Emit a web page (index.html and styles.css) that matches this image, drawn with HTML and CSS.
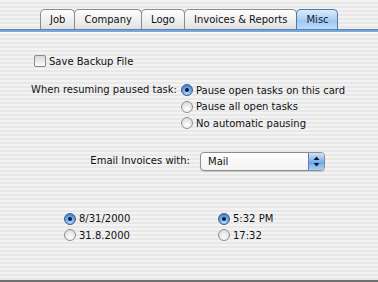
FILE: index.html
```html
<!DOCTYPE html>
<html lang="en">
<head>
    <meta charset="utf-8" />
    <title>Preferences - Misc</title>
    <link rel="stylesheet" href="styles.css">
</head>
<body>
<div class="window">
    <div class="tabs">
        <div class="tab">Job</div>
        <div class="tab">Company</div>
        <div class="tab">Logo</div>
        <div class="tab">Invoices &amp; Reports</div>
        <div class="tab selected">Misc</div>
    </div>
    <div class="tabline"></div>

    <div class="pane">
        <label class="check-row">
            <span class="checkbox"></span>
            <span>Save Backup File</span>
        </label>

        <div class="resume">
            <div class="label resume-label">When resuming paused task:</div>
            <div class="options">
                <div class="opt"><span class="radio on"></span>Pause open tasks on this card</div>
                <div class="opt"><span class="radio"></span>Pause all open tasks</div>
                <div class="opt"><span class="radio"></span>No automatic pausing</div>
            </div>
        </div>

        <div class="email">
            <div class="label email-label">Email Invoices with:</div>
            <div class="popup">
                <span class="popup-text">Mail</span>
                <span class="popup-arrows">
                    <svg width="7" height="11" viewBox="0 0 7 11">
                        <path d="M3.5 0.5 L6.5 4 L0.5 4 Z" fill="#0b1c3a"/>
                        <path d="M3.5 10.5 L6.5 7 L0.5 7 Z" fill="#0b1c3a"/>
                    </svg>
                </span>
            </div>
        </div>

        <div class="formats">
            <div class="options date">
                <div class="opt"><span class="radio on"></span>8/31/2000</div>
                <div class="opt"><span class="radio"></span>31.8.2000</div>
            </div>
            <div class="options time">
                <div class="opt"><span class="radio on"></span>5:32 PM</div>
                <div class="opt"><span class="radio"></span>17:32</div>
            </div>
        </div>
    </div>
</div>
</body>
</html>
```

FILE: styles.css
```css
html, body {
    margin: 0;
    height: 100%;
}
body {
    font-family: "DejaVu Sans", "Liberation Sans", sans-serif;
    font-size: 10px;
    color: #111;
    overflow: hidden;
}
.window {
    height: 280px;
    border-bottom: 2px solid #6f6f6f;
    background: repeating-linear-gradient(to bottom, #f3f3f3 0 2px, #e8e8e8 2px 4px);
    display: flex;
    flex-direction: column;
}

/* tabs */
.tabs {
    display: flex;
    padding: 9px 0 0 40px;
    height: 20px;
}
.tab {
    height: 19px;
    line-height: 20px;
    padding: 0 9px;
    margin-right: -1px;
    border: 1px solid #8c8c8c;
    border-bottom: none;
    border-radius: 5px 5px 0 0;
    background: linear-gradient(to bottom, #fdfdfd, #eeeeee 60%, #e0e0e0);
    color: #111;
}
.tab.selected {
    padding-right: 8px;
    border-color: #4f78a8;
    background: linear-gradient(to bottom, #d9ebfb, #acd0f2 50%, #9cc4ee 51%, #bcdcf8);
    color: #0b1c3a;
}
.tabline {
    height: 2px;
    background: #7aa6d8;
    border-top: 1px solid #5a82b4;
    border-bottom: 1px solid #fbfbfb;
}

/* content */
.pane {
    display: flex;
    flex-direction: column;
}
.check-row {
    display: flex;
    align-items: center;
    gap: 3px;
    margin: 21px 0 0 34px;
    height: 14px;
}
.checkbox {
    width: 10px;
    height: 10px;
    border: 1px solid #8a8a8a;
    border-radius: 2px;
    background: linear-gradient(to bottom, #d8d8d8, #fdfdfd);
}

.label {
    text-align: right;
    height: 16px;
    line-height: 16px;
}
.resume {
    display: flex;
    margin-top: 14px;
}
.resume-label {
    width: 181px;
    padding-right: 4px;
    box-sizing: border-box;
}
.options {
    display: flex;
    flex-direction: column;
}
.opt {
    display: flex;
    align-items: center;
    height: 16.5px;
    gap: 3px;
}
.radio {
    width: 10px;
    height: 10px;
    border: 1px solid #8f8f8f;
    border-radius: 50%;
    background: radial-gradient(circle at 50% 70%, #ffffff, #d2d2d2);
    display: flex;
    align-items: center;
    justify-content: center;
}
.radio.on {
    border-color: #3b5f93;
    background: radial-gradient(circle at 50% 75%, #b8dcff, #4c8fd8 70%, #2f66b0);
}
.radio.on::after {
    content: "";
    width: 4px;
    height: 4px;
    border-radius: 50%;
    background: #0d1a2c;
}

.email {
    display: flex;
    align-items: center;
    margin-top: 20px;
}
.email-label {
    width: 190px;
}
.popup {
    margin-left: 10px;
    width: 123px;
    height: 17px;
    border: 1px solid #8d8d8d;
    border-radius: 4px;
    background: linear-gradient(to bottom, #ffffff, #f2f2f2);
    display: flex;
    align-items: center;
    overflow: hidden;
    box-shadow: 0 1px 1px rgba(0,0,0,0.15);
}
.popup-text {
    flex: 1;
    padding-left: 7px;
}
.popup-arrows {
    width: 15px;
    height: 17px;
    border-left: 1px solid #5a82b4;
    background: linear-gradient(to bottom, #cfe4fa, #7fb0e8 50%, #6aa2e2 51%, #a9d0f6);
    display: flex;
    align-items: center;
    justify-content: center;
}

.formats {
    display: flex;
    margin-top: 40px;
}
.date {
    margin-left: 64px;
    width: 154px;
}
```
